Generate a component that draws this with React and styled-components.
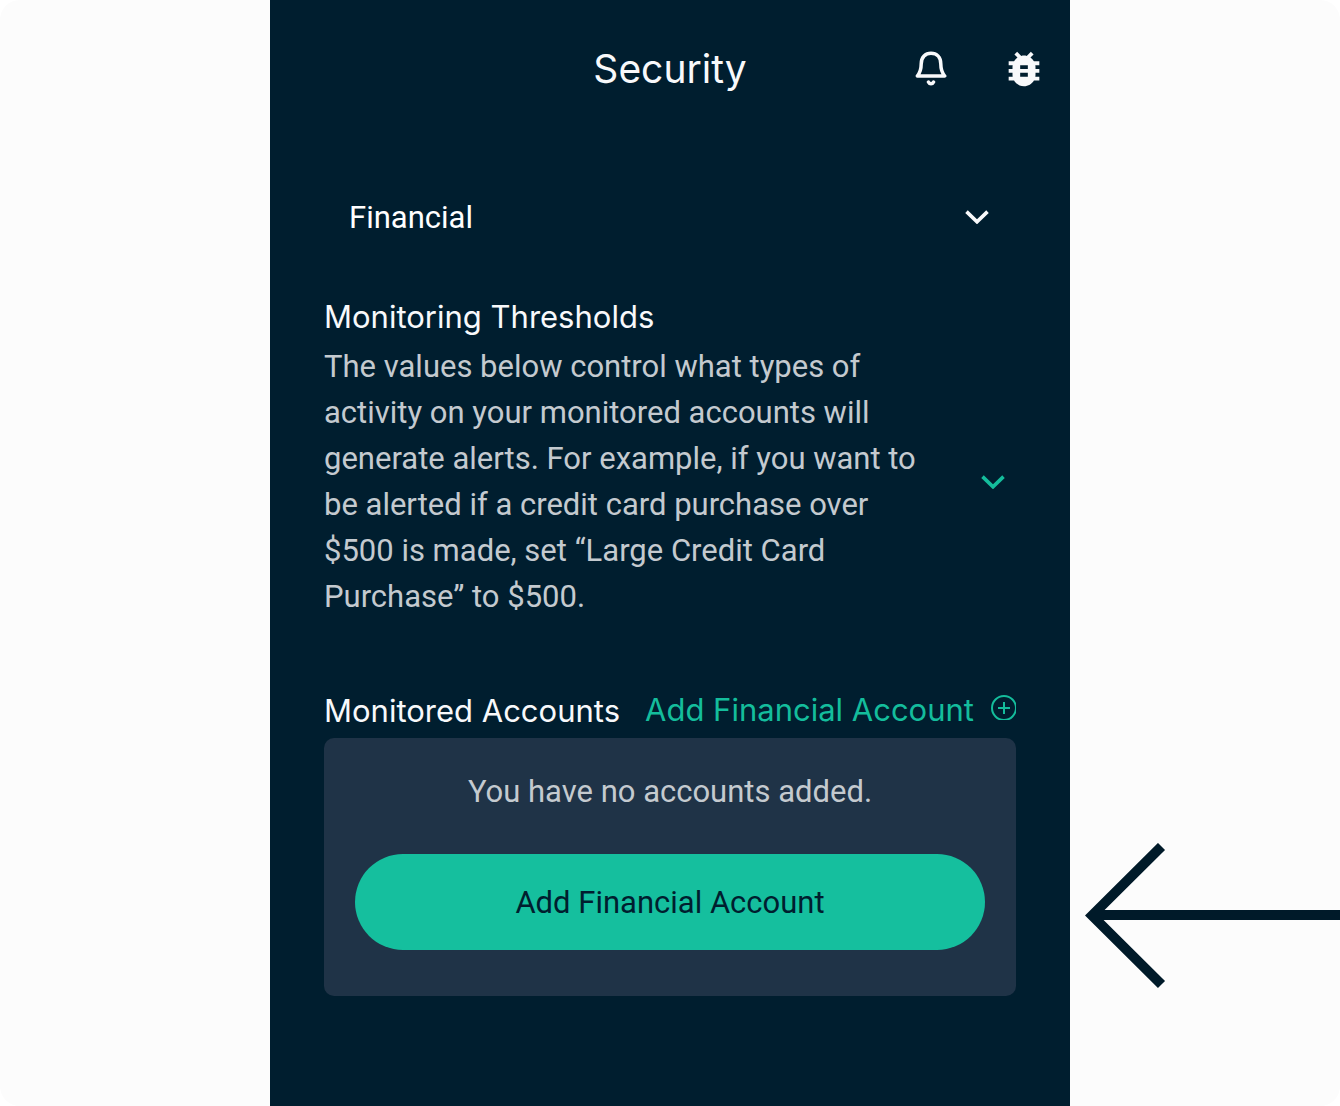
import React from "react";
import styled, { createGlobalStyle } from "styled-components";
import { MdBugReport } from "react-icons/md";

const GlobalStyle = createGlobalStyle`
  *, *::before, *::after {
    box-sizing: border-box;
  }
  body {
    margin: 0;
    background: #ffffff;
    font-family: Roboto, "Liberation Sans", sans-serif;
  }
`;

const Page = styled.div`
  display: grid;
  grid-template-columns: 1fr minmax(0, 800px) 1fr;
  min-height: 100vh;
  background: #fcfcfc;
  border-radius: 20px;
  overflow: hidden;
`;

const Screen = styled.main`
  grid-column: 2;
  background: #001e2f;
  color: #f8f9fb;
`;

const Header = styled.header`
  display: grid;
  grid-template-columns: 1fr auto 1fr;
  align-items: center;
  height: 138px;
  padding: 0 23px;
`;

const Title = styled.h1`
  grid-column: 2;
  margin: 0;
  font-family: Inter, Roboto, sans-serif;
  font-size: 39px;
  font-weight: 400;
  line-height: 46px;
`;

const Actions = styled.div`
  display: flex;
  align-items: center;
  justify-content: flex-end;
  gap: 54px;
`;

const IconButton = styled.button`
  display: flex;
  padding: 0;
  border: 0;
  background: none;
  color: ${({ $accent }) => ($accent ? "#14bd9c" : "inherit")};
  cursor: pointer;
`;

const Content = styled.div`
  padding: 48px 54px;
`;

const SelectBox = styled.div`
  display: grid;
  align-items: center;
  margin-bottom: 45px;

  svg {
    grid-area: 1 / 1;
    justify-self: end;
    margin-right: 27px;
    pointer-events: none;
  }
`;

const Select = styled.select`
  grid-area: 1 / 1;
  width: 100%;
  height: 62px;
  padding: 0 25px;
  border: 0;
  appearance: none;
  background: transparent;
  color: #ffffff;
  font-family: inherit;
  font-size: 31px;
`;

const Heading = styled.h2`
  margin: 0 0 3px;
  font-family: Inter, Roboto, sans-serif;
  font-size: 31px;
  font-weight: 400;
  line-height: 48px;
`;

const Thresholds = styled.section`
  margin-bottom: 67px;
`;

const ThresholdsBody = styled.div`
  display: flex;
  align-items: center;
  gap: 40px;

  button {
    padding: 12px 11px;
  }
`;

const Text = styled.p`
  flex: 1;
  margin: 0;
  color: #c4cacf;
  font-size: 31px;
  line-height: 46px;
`;

const AccountsHeader = styled.div`
  display: flex;
  align-items: flex-start;
  justify-content: space-between;
  white-space: nowrap;
`;

const AddLink = styled.a`
  display: flex;
  align-items: center;
  gap: 17px;
  color: #14bd9c;
  font-family: Inter, Roboto, sans-serif;
  font-size: 31px;
  line-height: 46px;
  text-decoration: none;

  svg {
    margin-bottom: 5px;
  }
`;

const Card = styled.div`
  padding: 31px 31px 46px;
  border-radius: 10px;
  background: #1f3347;
  text-align: center;
`;

const AddButton = styled.button`
  width: 100%;
  height: 96px;
  margin-top: 39px;
  border: 0;
  border-radius: 48px;
  background: #15bf9e;
  color: #001e2f;
  font-family: inherit;
  font-size: 31px;
  cursor: pointer;
`;

const Pointer = styled.aside`
  display: flex;
  align-items: flex-end;
  padding: 0 0 117px 15px;
  overflow: hidden;
`;

const BellIcon = () => (
  <svg width="32" height="36" viewBox="0 0 32 36" fill="none" stroke="currentColor" strokeWidth="3.5" strokeLinejoin="round" strokeLinecap="round">
    <path d="M2.3 25C5.2 21.5 6.2 18.5 6.2 13C6.2 6 10.5 2.3 16 2.3S25.8 6 25.8 13C25.8 18.5 26.8 21.5 29.7 25Z" />
    <path d="M13.4 31C14.4 33.2 17.6 33.2 18.6 31" />
  </svg>
);

const Chevron = () => (
  <svg width="24" height="14" viewBox="0 0 24 14" fill="none" stroke="currentColor" strokeWidth="3.6">
    <path d="M1.5 1.6L12 11.8L22.5 1.6" />
  </svg>
);

const PlusCircle = () => (
  <svg width="25" height="25" viewBox="0 0 25 25" fill="none" stroke="currentColor" strokeWidth="2">
    <circle cx="13" cy="13" r="12" />
    <path d="M13 7V19M7 13H19" />
  </svg>
);

const Arrow = () => (
  <svg width="100%" height="146" viewBox="0 0 255 146" preserveAspectRatio="xMinYMid slice" fill="none" stroke="#001a29" strokeWidth="10">
    <path d="M76.5 3.5L7 72.5L76.5 141.5" />
    <path d="M10 72H2000" />
  </svg>
);

const App = () => (
  <>
    <GlobalStyle />
    <Page>
      <Screen>
        <Header>
          <Title>Security</Title>
          <Actions>
            <IconButton aria-label="Notifications">
              <BellIcon />
            </IconButton>
            <IconButton aria-label="Report a bug">
              <MdBugReport size={46} />
            </IconButton>
          </Actions>
        </Header>
        <Content>
          <SelectBox>
            <Select aria-label="Category" defaultValue="financial">
              <option value="financial">Financial</option>
            </Select>
            <Chevron />
          </SelectBox>
          <Thresholds>
            <Heading>Monitoring Thresholds</Heading>
            <ThresholdsBody>
              <Text>
                The values below control what types of activity on your
                monitored accounts will generate alerts. For example, if you
                want to be alerted if a credit card purchase over $500 is made,
                set “Large Credit Card Purchase” to $500.
              </Text>
              <IconButton $accent aria-label="Show thresholds">
                <Chevron />
              </IconButton>
            </ThresholdsBody>
          </Thresholds>
          <section>
            <AccountsHeader>
              <Heading>Monitored Accounts</Heading>
              <AddLink href="#add">
                Add Financial Account
                <PlusCircle />
              </AddLink>
            </AccountsHeader>
            <Card>
              <Text>You have no accounts added.</Text>
              <AddButton>Add Financial Account</AddButton>
            </Card>
          </section>
        </Content>
      </Screen>
      <Pointer>
        <Arrow />
      </Pointer>
    </Page>
  </>
);

export default App;
